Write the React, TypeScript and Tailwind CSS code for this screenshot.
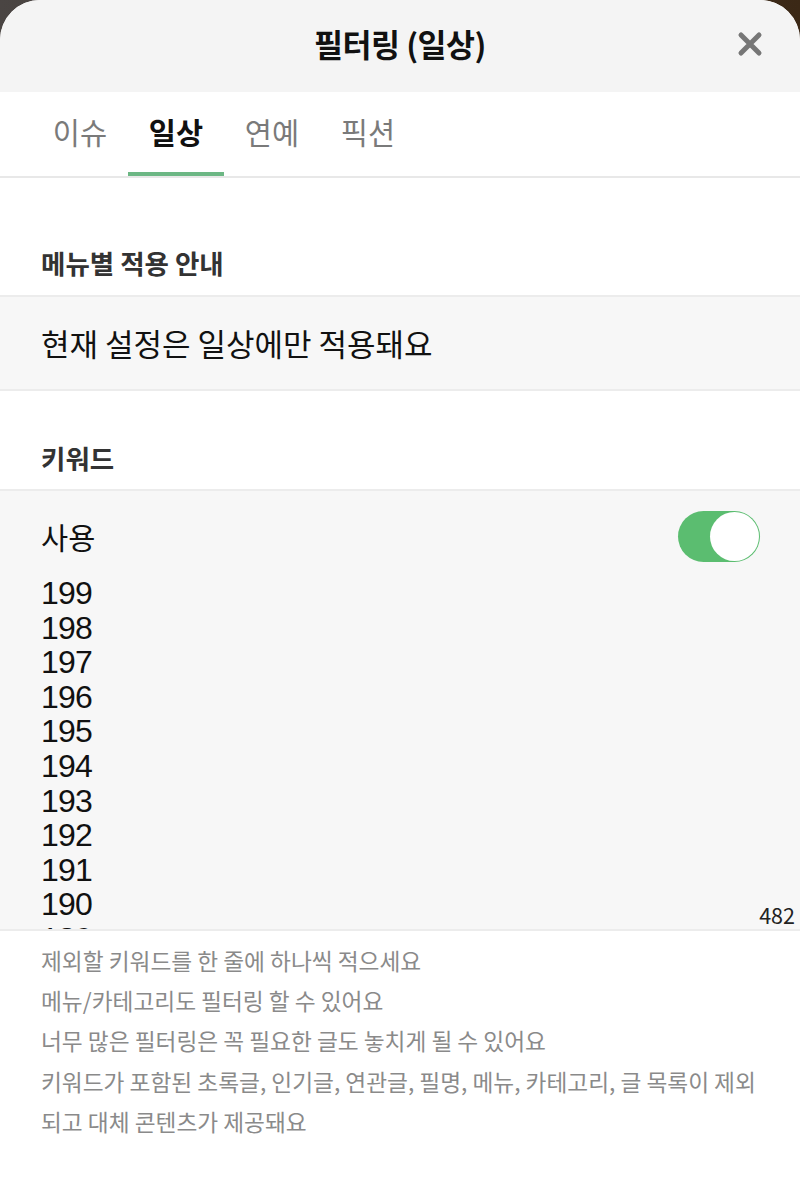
import { useState } from 'react';

const TABS = ['이슈', '일상', '연예', '픽션'];

const KEYWORDS = Array.from({ length: 200 }, (_, i) => String(199 - i)).join('\n');

const NOTES = [
  '제외할 키워드를 한 줄에 하나씩 적으세요',
  '메뉴/카테고리도 필터링 할 수 있어요',
  '너무 많은 필터링은 꼭 필요한 글도 놓치게 될 수 있어요',
  '키워드가 포함된 초록글, 인기글, 연관글, 필명, 메뉴, 카테고리, 글 목록이 제외',
  '되고 대체 콘텐츠가 제공돼요',
];

function CloseIcon() {
  return (
    <svg width="26" height="26" viewBox="0 0 26 26" fill="none">
      <path d="M4 4L22 22M22 4L4 22" stroke="#767676" strokeWidth="5" strokeLinecap="round" />
    </svg>
  );
}

export default function App() {
  const [tab, setTab] = useState(1);
  const [enabled, setEnabled] = useState(true);
  const [keywords, setKeywords] = useState(KEYWORDS);

  return (
    <div
      className="min-h-[1178px] w-[800px] bg-gradient-to-r from-[#4a4543] to-[#3b2816]"
      style={{ fontFamily: '"Noto Sans CJK KR", "Noto Sans", sans-serif' }}
    >
      <div className="min-h-[1178px] rounded-t-[40px] overflow-hidden bg-white">
        {/* Header */}
        <div className="relative h-[92px] bg-[#f4f4f4] flex items-center justify-center">
          <h1 className="text-[31.5px] font-bold text-[#111] leading-none tracking-[-0.5px] -mt-[4px]">필터링 (일상)</h1>
          <button className="absolute right-[37px] top-[31px]">
            <CloseIcon />
          </button>
        </div>

        {/* Tabs */}
        <div className="h-[86px] flex pl-8 border-b-2 border-[#e8e8e8]">
          {TABS.map((t, i) => (
            <button
              key={t}
              onClick={() => setTab(i)}
              className={`relative w-24 h-full flex items-center justify-center text-[29.5px] leading-none ${
                tab === i ? 'font-bold text-[#111]' : 'text-[#7a7a7a]'
              }`}
            >
              <span className="-mt-[4px]">{t}</span>
              {tab === i && <span className="absolute left-0 right-0 bottom-0 h-[4px] bg-[#6cb784]" />}
            </button>
          ))}
        </div>

        {/* Menu guide */}
        <div className="h-[117px] flex items-end px-[41px] pb-[15px]">
          <h2 className="text-[26.5px] font-bold text-[#333] leading-[34px]">메뉴별 적용 안내</h2>
        </div>
        <div className="h-[96px] bg-[#f7f7f7] border-y-2 border-[#ececec] flex items-center px-[41px]">
          <p className="text-[31px] text-[#111] leading-none -mt-[2px]">현재 설정은 일상에만 적용돼요</p>
        </div>

        {/* Keyword */}
        <div className="h-[98px] flex items-end px-[41px] pb-[14px]">
          <h2 className="text-[26.5px] font-bold text-[#333] leading-[34px]">키워드</h2>
        </div>
        <div className="relative h-[442px] bg-[#f7f7f7] border-y-2 border-[#ececec] overflow-hidden">
          <div className="flex items-center justify-between pl-[41px] pr-[40px] pt-[20px]">
            <span className="text-[29.5px] text-[#111] leading-none">사용</span>
            <button
              onClick={() => setEnabled(!enabled)}
              className={`w-[82px] h-[51px] rounded-full p-[1px] flex items-center ${
                enabled ? 'bg-[#5bbd70] justify-end' : 'bg-[#dcdcdc] justify-start'
              }`}
            >
              <span className="w-[49px] h-[49px] rounded-full bg-white" />
            </button>
          </div>
          <textarea
            value={keywords}
            onChange={(e) => setKeywords(e.target.value)}
            className="block w-full h-[354px] mt-[14px] px-[41px] bg-transparent resize-none outline-none overflow-hidden text-[32px] leading-[34.6px] text-[#111] tracking-[-0.8px]"
            style={{ fontFamily: '"Liberation Sans", "Noto Sans CJK KR", sans-serif' }}
          />
          <span className="absolute right-[5px] bottom-[4px] text-[21.5px] leading-none text-[#222]">482</span>
        </div>

        {/* Notes */}
        <div className="px-[41px] pt-[10px] pb-[40px]">
          {NOTES.map((n) => (
            <p key={n} className="text-[22.7px] leading-[40.2px] text-[#8a8a8a] whitespace-nowrap">
              {n}
            </p>
          ))}
        </div>
      </div>
    </div>
  );
}
